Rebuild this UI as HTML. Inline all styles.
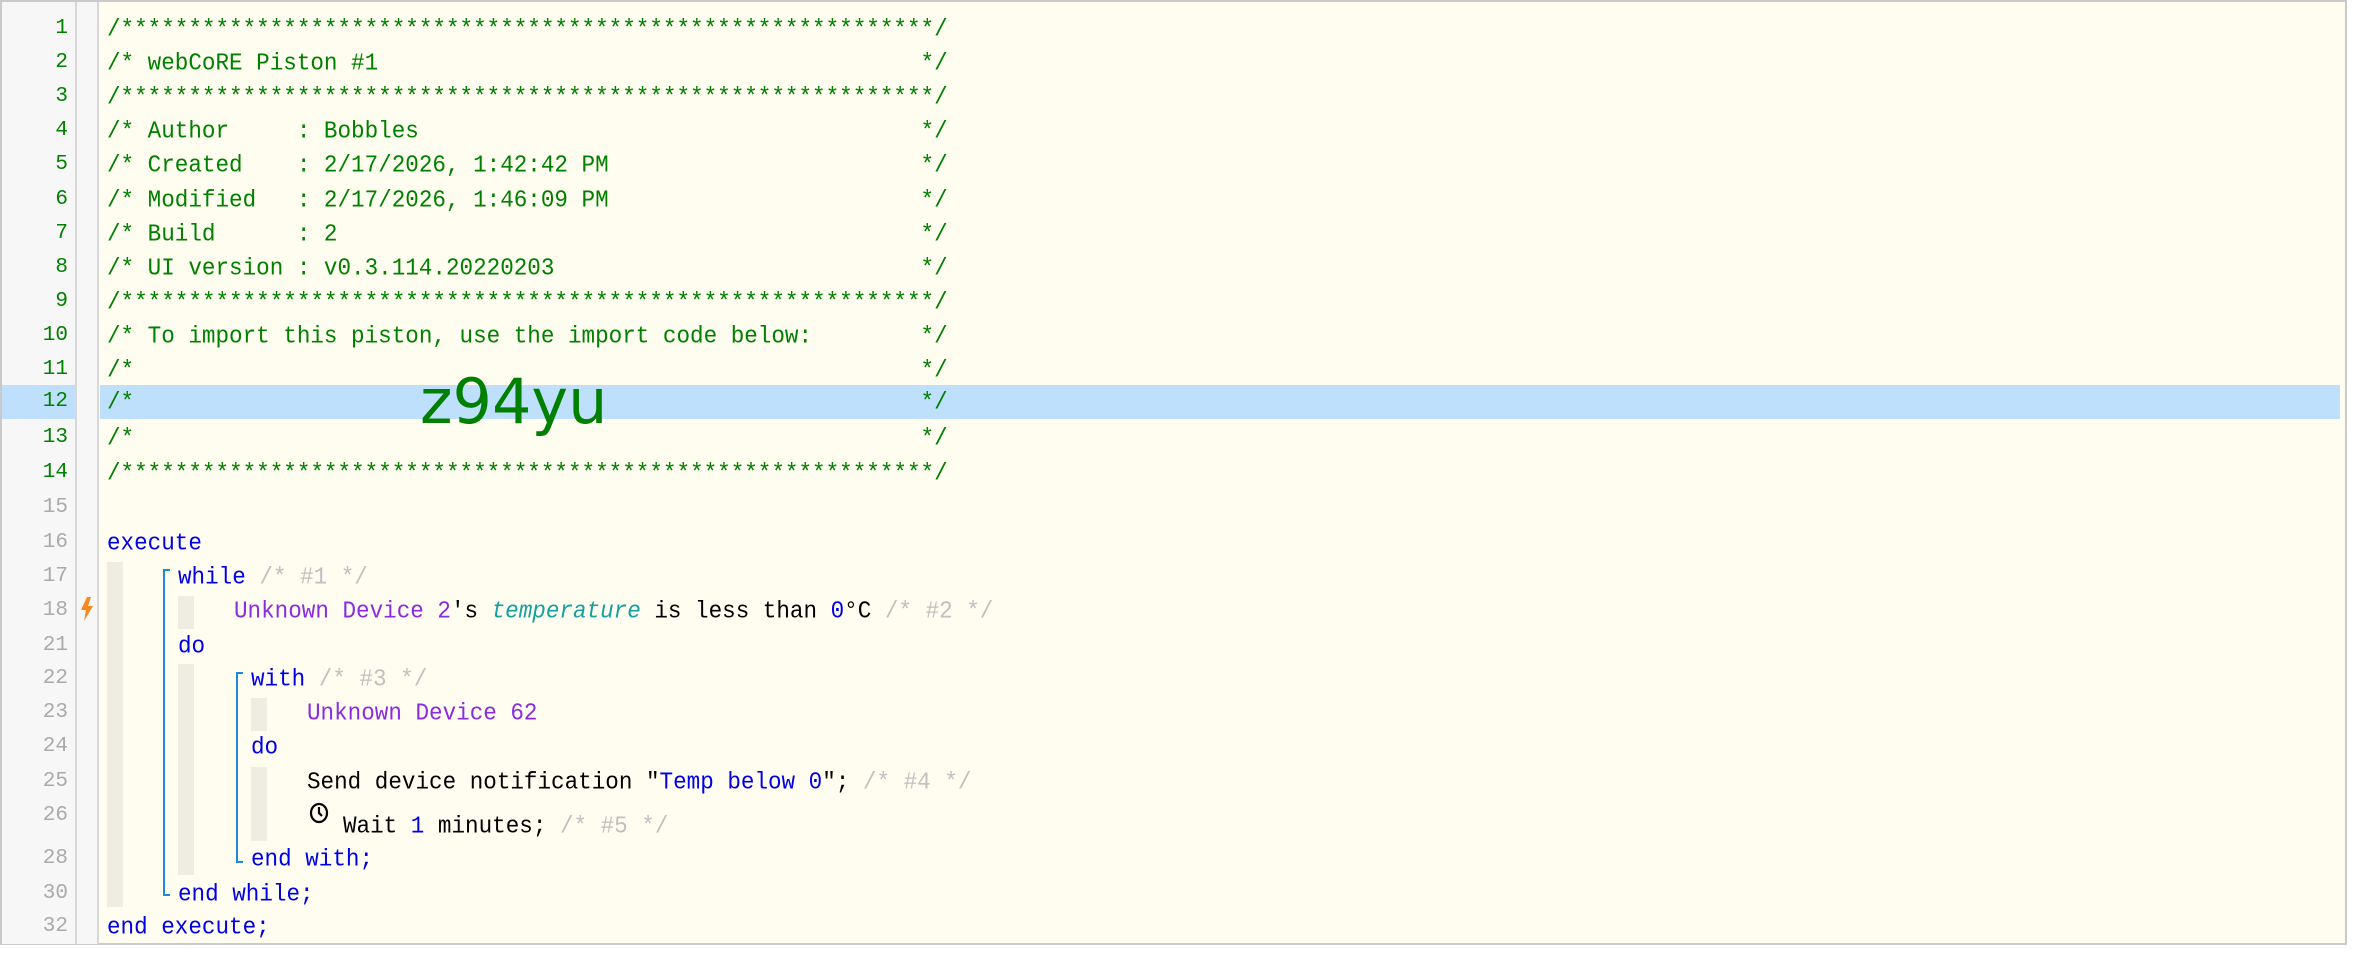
<!DOCTYPE html>
<html><head><meta charset="utf-8"><style>
html,body{margin:0;padding:0;background:#fff;}
#w{position:relative;width:2356px;height:960px;overflow:hidden;}
#ed{position:absolute;left:0;top:0;width:2347px;height:945px;border:2px solid #cacaca;background:#fffdf0;box-sizing:border-box;}
#g1{position:absolute;left:2px;top:2px;width:73px;height:942px;background:#f7f7f7;border-right:2px solid #d8d8d8;}
#g2{position:absolute;left:77px;top:2px;width:20px;height:942px;background:#f7f7f7;border-right:2px solid #d8d8d8;}
.l{position:absolute;left:107px;height:34px;line-height:34px;font-family:"Liberation Mono",monospace;font-size:22.6px;white-space:pre;color:#008000;transform:scaleY(1.06);transform-origin:left center;}
.n{position:absolute;left:0;width:68px;text-align:right;height:34px;line-height:34px;font-family:"Liberation Mono",monospace;font-size:21px;color:#008000;}
.g{color:#aaa}
.k{color:#0000e6}
.p{color:#8a2be2}
.t{color:#17a0a0;font-style:italic}
.b{color:#000}
.c{color:#c0c0c0}
.blk{position:absolute;background:#efede2;width:16px;}
.br{position:absolute;border-left:2px solid #1e88e5;width:5px;}
.br:before{content:"";position:absolute;left:0;top:0;width:5px;border-top:2px solid #1e88e5;}
.br:after{content:"";position:absolute;left:0;bottom:0;width:5px;border-bottom:2px solid #1e88e5;}
</style></head><body><div id="w">
<div id="ed"></div>
<div id="g1"></div><div id="g2"></div>
<div style="position:absolute;left:2px;top:385px;width:73px;height:34px;background:#bfe0fd"></div>
<div style="position:absolute;left:100px;top:385px;width:2240px;height:34px;background:#bfe0fd"></div>

<div class="n" style="top:12px">1</div><div class="l" style="top:12px">/************************************************************/</div>
<div class="n" style="top:46px">2</div><div class="l" style="top:46px">/* webCoRE Piston #1                                        */</div>
<div class="n" style="top:80px">3</div><div class="l" style="top:80px">/************************************************************/</div>
<div class="n" style="top:114px">4</div><div class="l" style="top:114px">/* Author     : Bobbles                                     */</div>
<div class="n" style="top:148px">5</div><div class="l" style="top:148px">/* Created    : 2/17/2026, 1:42:42 PM                       */</div>
<div class="n" style="top:183px">6</div><div class="l" style="top:183px">/* Modified   : 2/17/2026, 1:46:09 PM                       */</div>
<div class="n" style="top:217px">7</div><div class="l" style="top:217px">/* Build      : 2                                           */</div>
<div class="n" style="top:251px">8</div><div class="l" style="top:251px">/* UI version : v0.3.114.20220203                           */</div>
<div class="n" style="top:285px">9</div><div class="l" style="top:285px">/************************************************************/</div>
<div class="n" style="top:319px">10</div><div class="l" style="top:319px">/* To import this piston, use the import code below:        */</div>
<div class="n" style="top:353px">11</div><div class="l" style="top:353px">/*                                                          */</div>
<div class="n" style="top:385px">12</div><div class="l" style="top:385px">/*                                                          */</div>
<div style="position:absolute;left:420px;top:366px;font-family:'DejaVu Sans',sans-serif;font-size:62px;line-height:72px;color:#008000">z94yu</div>
<div class="n" style="top:421px">13</div><div class="l" style="top:421px">/*                                                          */</div>
<div class="n" style="top:456px">14</div><div class="l" style="top:456px">/************************************************************/</div>
<div class="n g" style="top:491px">15</div>
<div class="n g" style="top:526px">16</div><div class="l k" style="top:526px">execute</div>
<div class="n g" style="top:560px">17</div><div class="l k" style="top:560px;left:178px">while <span class="c">/* #1 */</span></div>
<div class="n g" style="top:594px">18</div><div class="l" style="top:594px;left:234px"><span class="p">Unknown Device 2</span><span class="b">'s </span><span class="t">temperature</span><span class="b"> is less than </span><span class="k">0</span><span class="b">°C </span><span class="c">/* #2 */</span></div>
<div class="n g" style="top:629px">21</div><div class="l k" style="top:629px;left:178px">do</div>
<div class="n g" style="top:662px">22</div><div class="l k" style="top:662px;left:251px">with <span class="c">/* #3 */</span></div>
<div class="n g" style="top:696px">23</div><div class="l p" style="top:696px;left:307px">Unknown Device 62</div>
<div class="n g" style="top:730px">24</div><div class="l k" style="top:730px;left:251px">do</div>
<div class="n g" style="top:765px">25</div><div class="l b" style="top:765px;left:307px">Send device notification "<span class="k">Temp below 0</span>"; <span class="c">/* #4 */</span></div>
<div class="n g" style="top:799px">26</div><div class="l b" style="top:809px;left:343px">Wait <span class="k">1</span> minutes; <span class="c">/* #5 */</span></div>
<svg style="position:absolute;left:309px;top:802px" width="20" height="22" viewBox="0 0 20 22"><ellipse cx="10" cy="11" rx="8" ry="9" fill="none" stroke="#000" stroke-width="2.2"/><path d="M10 5v6l3 3" fill="none" stroke="#000" stroke-width="2.2"/></svg>
<div class="n g" style="top:842px">28</div><div class="l k" style="top:842px;left:251px">end with;</div>
<div class="n g" style="top:877px">30</div><div class="l k" style="top:877px;left:178px">end while;</div>
<div class="n g" style="top:910px">32</div><div class="l k" style="top:910px">end execute;</div>

<div class="blk" style="left:107px;top:562px;height:345px"></div>
<div class="blk" style="left:178px;top:596px;height:33px"></div>
<div class="blk" style="left:178px;top:664px;height:211px"></div>
<div class="blk" style="left:251px;top:698px;height:33px"></div>
<div class="blk" style="left:251px;top:767px;height:74px"></div>
<div class="br" style="left:163px;top:569px;height:327px"></div>
<div class="br" style="left:236px;top:672px;height:191px"></div>
<svg style="position:absolute;left:80px;top:597px" width="14" height="24" viewBox="0 0 14 24"><path d="M7 0L1 13h5l-2 11 9-15H8l3-9z" fill="#f5891f"/></svg>
</div></body></html>
